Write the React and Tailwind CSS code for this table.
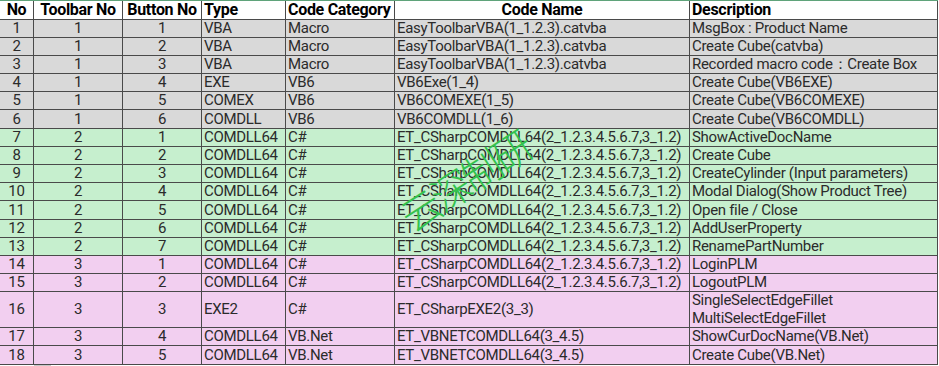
const rows = [
  { no: 1, tb: 1, bt: 1, type: 'VBA', cat: 'Macro', code: 'EasyToolbarVBA(1_1.2.3).catvba', desc: ['MsgBox : Product Name'], bg: 'bg-[#d9d9d9]', h: 'h-[18px]' },
  { no: 2, tb: 1, bt: 2, type: 'VBA', cat: 'Macro', code: 'EasyToolbarVBA(1_1.2.3).catvba', desc: ['Create Cube(catvba)'], bg: 'bg-[#d9d9d9]', h: 'h-[18px]' },
  { no: 3, tb: 1, bt: 3, type: 'VBA', cat: 'Macro', code: 'EasyToolbarVBA(1_1.2.3).catvba', desc: ['Recorded macro code：Create Box'], bg: 'bg-[#d9d9d9]', h: 'h-[18px]' },
  { no: 4, tb: 1, bt: 4, type: 'EXE', cat: 'VB6', code: 'VB6Exe(1_4)', desc: ['Create Cube(VB6EXE)'], bg: 'bg-[#d9d9d9]', h: 'h-[18px]' },
  { no: 5, tb: 1, bt: 5, type: 'COMEX', cat: 'VB6', code: 'VB6COMEXE(1_5)', desc: ['Create Cube(VB6COMEXE)'], bg: 'bg-[#d9d9d9]', h: 'h-[19px]' },
  { no: 6, tb: 1, bt: 6, type: 'COMDLL', cat: 'VB6', code: 'VB6COMDLL(1_6)', desc: ['Create Cube(VB6COMDLL)'], bg: 'bg-[#d9d9d9]', h: 'h-[18px]' },
  { no: 7, tb: 2, bt: 1, type: 'COMDLL64', cat: 'C#', code: 'ET_CSharpCOMDLL64(2_1.2.3.4.5.6.7,3_1.2)', desc: ['ShowActiveDocName'], bg: 'bg-[#c6efce]', h: 'h-[18px]' },
  { no: 8, tb: 2, bt: 2, type: 'COMDLL64', cat: 'C#', code: 'ET_CSharpCOMDLL64(2_1.2.3.4.5.6.7,3_1.2)', desc: ['Create Cube'], bg: 'bg-[#c6efce]', h: 'h-[18px]' },
  { no: 9, tb: 2, bt: 3, type: 'COMDLL64', cat: 'C#', code: 'ET_CSharpCOMDLL64(2_1.2.3.4.5.6.7,3_1.2)', desc: ['CreateCylinder (Input parameters)'], bg: 'bg-[#c6efce]', h: 'h-[18px]' },
  { no: 10, tb: 2, bt: 4, type: 'COMDLL64', cat: 'C#', code: 'ET_CSharpCOMDLL64(2_1.2.3.4.5.6.7,3_1.2)', desc: ['Modal Dialog(Show Product Tree)'], bg: 'bg-[#c6efce]', h: 'h-[19px]' },
  { no: 11, tb: 2, bt: 5, type: 'COMDLL64', cat: 'C#', code: 'ET_CSharpCOMDLL64(2_1.2.3.4.5.6.7,3_1.2)', desc: ['Open file / Close'], bg: 'bg-[#c6efce]', h: 'h-[18px]' },
  { no: 12, tb: 2, bt: 6, type: 'COMDLL64', cat: 'C#', code: 'ET_CSharpCOMDLL64(2_1.2.3.4.5.6.7,3_1.2)', desc: ['AddUserProperty'], bg: 'bg-[#c6efce]', h: 'h-[18px]' },
  { no: 13, tb: 2, bt: 7, type: 'COMDLL64', cat: 'C#', code: 'ET_CSharpCOMDLL64(2_1.2.3.4.5.6.7,3_1.2)', desc: ['RenamePartNumber'], bg: 'bg-[#c6efce]', h: 'h-[18px]' },
  { no: 14, tb: 3, bt: 1, type: 'COMDLL64', cat: 'C#', code: 'ET_CSharpCOMDLL64(2_1.2.3.4.5.6.7,3_1.2)', desc: ['LoginPLM'], bg: 'bg-[#f2cff0]', h: 'h-[18px]' },
  { no: 15, tb: 3, bt: 2, type: 'COMDLL64', cat: 'C#', code: 'ET_CSharpCOMDLL64(2_1.2.3.4.5.6.7,3_1.2)', desc: ['LogoutPLM'], bg: 'bg-[#f2cff0]', h: 'h-[18px]' },
  { no: 16, tb: 3, bt: 3, type: 'EXE2', cat: 'C#', code: 'ET_CSharpEXE2(3_3)', desc: ['SingleSelectEdgeFillet', 'MultiSelectEdgeFillet'], bg: 'bg-[#f2cff0]', h: 'h-[36px]' },
  { no: 17, tb: 3, bt: 4, type: 'COMDLL64', cat: 'VB.Net', code: 'ET_VBNETCOMDLL64(3_4.5)', desc: ['ShowCurDocName(VB.Net)'], bg: 'bg-[#f2cff0]', h: 'h-[19px]' },
  { no: 18, tb: 3, bt: 5, type: 'COMDLL64', cat: 'VB.Net', code: 'ET_VBNETCOMDLL64(3_4.5)', desc: ['Create Cube(VB.Net)'], bg: 'bg-[#f2cff0]', h: 'h-[18px]' },
];

const cell = 'border-r border-b border-[#4a4a4a] flex items-center whitespace-nowrap';

const App = () => {
  return (
    <div
      className="relative w-[939px] h-[366px] bg-white text-[#2b2b2b] text-[15px] leading-[18px] tracking-[-0.3px] overflow-hidden"
      style={{ fontFamily: 'Roboto, "Liberation Sans", sans-serif' }}
    >
      <div className="border-t border-[#5fa37a] w-[938px]">
        <div className="grid grid-cols-[34px_89px_79px_84px_109px_295px_248px] h-[18px] text-[16px] font-bold text-black bg-white">
          <div className={`${cell} justify-center`}>No</div>
          <div className={`${cell} justify-center`}>Toolbar No</div>
          <div className={`${cell} justify-center`}>Button No</div>
          <div className={`${cell} pl-[2px]`}>Type</div>
          <div className={`${cell} pl-[2px]`}>Code Category</div>
          <div className={`${cell} justify-center`}>Code Name</div>
          <div className={`${cell} pl-[2px]`}>Description</div>
        </div>

        {rows.map((r) => (
          <div
            key={r.no}
            className={`grid grid-cols-[34px_89px_79px_84px_109px_295px_248px] ${r.h} ${r.bg}`}
          >
            <div className={`${cell} justify-center`}>{r.no}</div>
            <div className={`${cell} justify-center`}>{r.tb}</div>
            <div className={`${cell} justify-center`}>{r.bt}</div>
            <div className={`${cell} pl-[2px]`}>{r.type}</div>
            <div className={`${cell} pl-[2px]`}>{r.cat}</div>
            <div className={`${cell} pl-[2px]`}>{r.code}</div>
            <div className={`${cell} pl-[2px] flex-col items-start justify-center`}>
              {r.desc.map((d) => (
                <span key={d}>{d}</span>
              ))}
            </div>
          </div>
        ))}
      </div>

      <div className="ml-[34px] w-[17px] h-[2px] bg-[#c8c8c8]" />

      {/* watermark */}
      <div
        className="absolute left-[392px] top-[160px] -rotate-[33deg] text-[40px] leading-none tracking-[-4px] text-[#33c24d] pointer-events-none"
        style={{ fontFamily: '"Noto Sans CJK SC", sans-serif', fontWeight: 300 }}
      >
        云深制研
      </div>
    </div>
  );
};

export default App;
